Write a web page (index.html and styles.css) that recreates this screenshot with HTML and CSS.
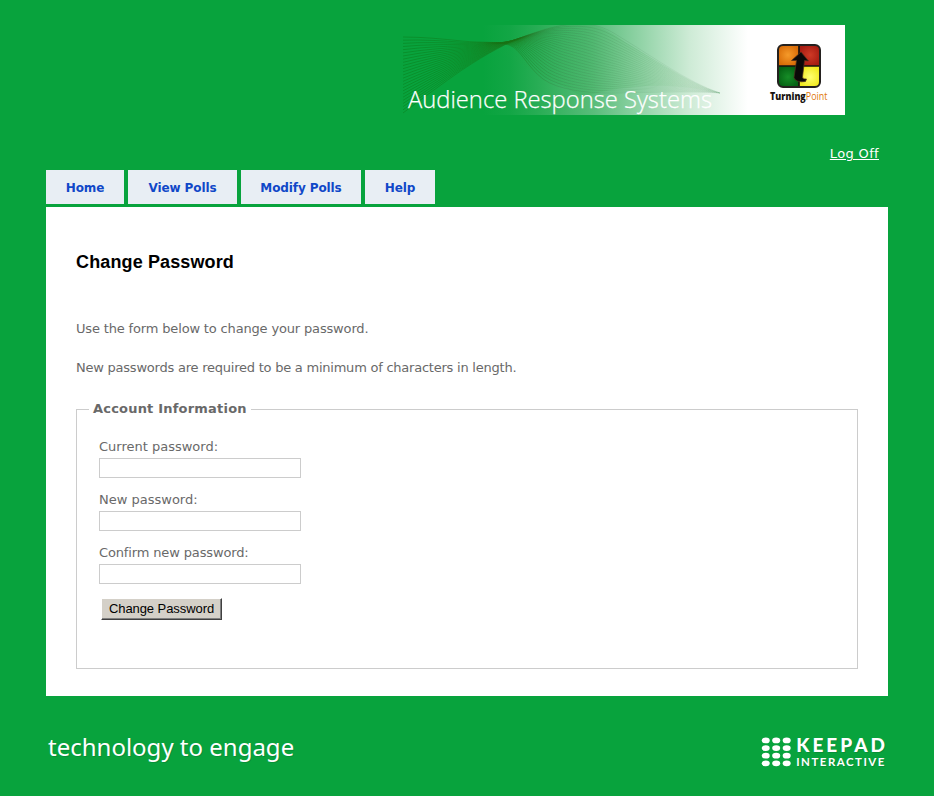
FILE: index.html
```
<!DOCTYPE html>
<html lang="en">
<head>
<meta charset="utf-8">
<title>Change Password</title>
<link rel="stylesheet" href="styles.css">
</head>
<body>
<div class="page">
  <header class="header">
    <svg class="banner" width="442" height="90" viewBox="0 0 442 90">
      <defs>
        <linearGradient id="fade" gradientUnits="userSpaceOnUse" x1="80" y1="0" x2="345" y2="0">
          <stop offset="0" stop-color="#08a33d"/>
          <stop offset=".1" stop-color="#12a645"/>
          <stop offset=".22" stop-color="#2bae57"/>
          <stop offset=".42" stop-color="#5abd7b"/>
          <stop offset=".6" stop-color="#93d4a8"/>
          <stop offset=".78" stop-color="#ceebd6"/>
          <stop offset="1" stop-color="#fff"/>
        </linearGradient>
        <linearGradient id="stroke" gradientUnits="userSpaceOnUse" x1="0" y1="0" x2="320" y2="0">
          <stop offset="0" stop-color="#087512" stop-opacity=".6"/>
          <stop offset=".36" stop-color="#1b6f13" stop-opacity=".55"/>
          <stop offset=".5" stop-color="#377b48" stop-opacity=".38"/>
          <stop offset="1" stop-color="#6aa578" stop-opacity=".06"/>
        </linearGradient>
        <linearGradient id="hill" gradientUnits="userSpaceOnUse" x1="90" y1="0" x2="320" y2="0">
          <stop offset="0" stop-color="#2aa648" stop-opacity="0"/>
          <stop offset=".4" stop-color="#2aa648" stop-opacity=".2"/>
          <stop offset="1" stop-color="#8fd08f" stop-opacity=".05"/>
        </linearGradient>
        <radialGradient id="orange"><stop offset="0" stop-color="#f59a2a"/><stop offset="1" stop-color="#d96d08"/></radialGradient>
        <radialGradient id="red"><stop offset="0" stop-color="#cf3a26"/><stop offset="1" stop-color="#a71c12"/></radialGradient>
        <radialGradient id="green"><stop offset="0" stop-color="#168d27"/><stop offset="1" stop-color="#056214"/></radialGradient>
        <radialGradient id="yellow"><stop offset="0" stop-color="#ffff72"/><stop offset="1" stop-color="#f1e91e"/></radialGradient>
        <clipPath id="tile"><rect x="375" y="20" width="42" height="42" rx="5"/></clipPath>
      </defs>
      <rect width="442" height="90" fill="url(#fade)"/>
      <path d="M92 25C125 8 145 0 165 0C192 -4 204 5 222 17C250 34 285 57 317 68C260 56 220 60 180 72Z" fill="url(#hill)"/>
      <g id="waves" fill="none" stroke="url(#stroke)" stroke-width=".7"></g>
      <text class="banner-title" x="5" y="83" textLength="304" lengthAdjust="spacingAndGlyphs">Audience Response Systems</text>
      <g clip-path="url(#tile)">
        <rect x="374" y="19" width="22" height="22" fill="url(#orange)"/>
        <rect x="396" y="19" width="22" height="22" fill="url(#red)"/>
        <rect x="374" y="41" width="22" height="22" fill="url(#green)"/>
        <rect x="396" y="41" width="22" height="22" fill="url(#yellow)"/>
      </g>
      <path d="M396 20v42M375 41h42" stroke="#17130f" stroke-width="1.700"/>
      <rect x="375" y="20" width="42" height="42" rx="5" fill="none" stroke="#24211f" stroke-width="2"/>
      <path d="M398 27L405.500 36L401.500 35.500L399.500 52Q399.500 54.500 403.500 54L402.500 56.500Q393 58 391 52.500L393.500 35.500L388.500 35.500Z" fill="#0b0908" stroke="#50301c" stroke-width=".7"/>
      <text class="brand" x="367" y="74.500" textLength="57.500" lengthAdjust="spacingAndGlyphs">Turning<tspan class="brand-light">Point</tspan></text>
    </svg>
  </header>
  <div class="account"><a href="#">Log Off</a></div>
  <nav class="menu">
    <a class="home" href="#">Home</a>
    <a class="view" href="#">View Polls</a>
    <a class="modify" href="#">Modify Polls</a>
    <a class="help" href="#">Help</a>
  </nav>
  <main class="content">
    <h1>Change Password</h1>
    <p>Use the form below to change your password.</p>
    <p class="length-note">New passwords are required to be a minimum of characters in length.</p>
    <form>
      <fieldset>
        <legend>Account Information</legend>
        <label for="current">Current password:</label>
        <input id="current" type="password">
        <label for="new">New password:</label>
        <input id="new" type="password">
        <label class="confirm" for="confirm">Confirm new password:</label>
        <input id="confirm" type="password">
        <button type="button">Change Password</button>
      </fieldset>
    </form>
  </main>
  <footer class="footer">
    <div class="slogan">technology to engage</div>
    <div class="logo">
      <svg width="38" height="40" viewBox="0 0 38 40">
        <g fill="#fff">
          <ellipse cx="6" cy="10" rx="4.200" ry="3"/><ellipse cx="17" cy="10" rx="4.200" ry="3"/><ellipse cx="28" cy="10" rx="4.200" ry="3"/>
          <ellipse cx="6" cy="18" rx="4.200" ry="3"/><ellipse cx="17" cy="18" rx="4.200" ry="3"/><ellipse cx="28" cy="18" rx="4.200" ry="3"/>
          <ellipse cx="6" cy="26" rx="4.200" ry="3"/><ellipse cx="17" cy="26" rx="4.200" ry="3"/><ellipse cx="28" cy="26" rx="4.200" ry="3"/>
          <ellipse cx="6" cy="34" rx="4.200" ry="3"/><ellipse cx="17" cy="34" rx="4.200" ry="3"/><ellipse cx="28" cy="34" rx="4.200" ry="3"/>
        </g>
      </svg>
      <div class="wordmark">
        <div class="keepad">KEEPAD</div>
        <div class="interactive">INTERACTIVE</div>
      </div>
    </div>
  </footer>
</div>
<script src="waves.js"></script>
</body>
</html>
```
FILE: styles.css
```
* { box-sizing: border-box; }
body {
  margin: 0;
  background: #08a33d;
  color: #696969;
  font: 13px/16px "DejaVu Sans", Verdana, sans-serif;
}
.page { width: 842px; margin-left: 46px; }
.header { padding: 25px 43px 0 0; display: flex; justify-content: flex-end; }
.banner { display: block; }
.banner-title { font: 300 24.500px "Open Sans", sans-serif; fill: #fff; stroke: #fff; stroke-width: .25px; }
.brand { font: 800 10px "Open Sans", sans-serif; fill: #17120f; }
.brand-light { font-weight: 400; fill: #e1780c; }
.account { height: 55px; padding: 31px 9px 0 0; text-align: right; letter-spacing: .35px; }
.account a { color: #fff; text-underline-offset: 1px; }
.menu { display: flex; gap: 4px; height: 37px; }
.menu a {
  height: 34px;
  background: #e8eef4;
  color: #1048c8;
  font-size: 12px;
  font-weight: bold;
  line-height: 36px;
  text-align: center;
  text-decoration: none;
  white-space: nowrap;
  letter-spacing: -.1px;
}
.menu .home { width: 78px; }
.menu .view { width: 109px; }
.menu .modify { width: 120px; }
.menu .help { width: 70px; }
.content { height: 489px; padding: 44px 30px 0; background: #fff; }
h1 { margin: 0 0 48px; color: #000; font: bold 18px/22px "Liberation Sans", Arial, sans-serif; letter-spacing: .13px; }
p { margin: 0 0 23px; letter-spacing: -.16px; }
.length-note { margin-bottom: 25px; letter-spacing: -.23px; }
form { margin: 0; }
fieldset { height: 268px; margin: 0; padding: 22px 22px 0; border: 1px solid #ccc; }
legend { margin-left: -10px; padding: 0 4px; font-weight: bold; letter-spacing: .2px; }
label { display: block; height: 19px; }
.confirm { letter-spacing: -.14px; }
input { display: block; width: 202px; height: 20px; margin: 0 0 14px; padding: 2px; border: 1px solid #ccc; background: #fff; }
button {
  display: block;
  width: 121px;
  height: 22px;
  margin: 14px 0 0 2px;
  padding: 0;
  background: #d4d0c8;
  border: 1px solid;
  border-color: #fff #404040 #404040 #fff;
  box-shadow: inset -1px -1px #808080;
  color: #000;
  font: 13px/20px "Liberation Sans", Arial, sans-serif;
  letter-spacing: -.07px;
}
.footer { display: flex; justify-content: space-between; padding-top: 34px; color: #fff; }
.slogan { padding: 1px 0 0 2px; font: 24px/32px "Noto Sans", sans-serif; text-shadow: 1px 1px 0 #087b3180; }
.logo { display: flex; width: 128px; }
.logo svg { display: block; }
.wordmark { padding-top: 5px; font-family: Lato, sans-serif; font-weight: 900; text-shadow: 1px 1px 0 #087b3180; white-space: nowrap; }
.keepad { font-size: 19px; line-height: 20px; letter-spacing: 3px; }
.interactive { font-size: 11.500px; line-height: 14px; letter-spacing: 1.480px; font-weight: bold; }
```
FILE: waves.js
```
// Draws the fan of lines that crosses the banner.
// Each line is a blend of the steep outer curve and the flat inner one.
const outer = [0, 88, 20, 73, 40, 58, 59, 45, 85, 28, 105, 17, 125, 10, 145, 3, 160, -1, 177, -1, 200, -1, 210, 8, 222, 15, 250, 32, 285, 57, 317, 68];
const inner = [0, 12, 20, 12, 40, 14, 59, 16, 80, 18, 92, 16, 106, 20, 118, 24, 124, 42, 140, 54, 155, 65, 185, 68, 205, 68, 235, 68, 285, 66, 317, 68];
const group = document.getElementById("waves");
const count = 25;
for (let i = 0; i < count; i++) {
  const t = i / (count - 1);
  const p = outer.map((v, k) => (v * (1 - t) + inner[k] * t).toFixed(2));
  let d = `M${p[0]} ${p[1]}`;
  for (let k = 2; k < p.length; k += 6) d += ` C${p.slice(k, k + 6).join(" ")}`;
  const path = document.createElementNS("http://www.w3.org/2000/svg", "path");
  path.setAttribute("d", d);
  group.appendChild(path);
}
```
